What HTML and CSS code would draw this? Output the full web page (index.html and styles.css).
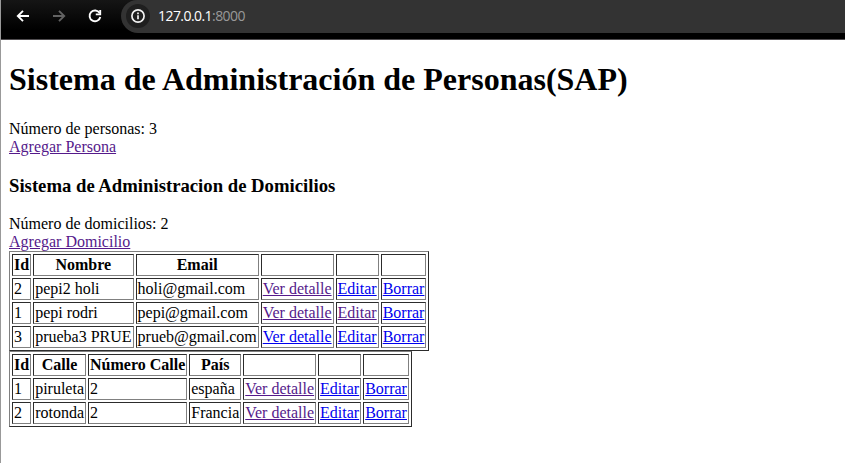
FILE: index.html
```html
<!DOCTYPE html>
<html lang="es">
<head>
<meta charset="utf-8">
<title>Sistema de Administración de Personas</title>
<link rel="stylesheet" href="styles.css">
</head>
<body>
<header class="toolbar">
  <svg class="nav" viewBox="0 0 16 16"><path d="M14 8H3.2M8 2.8 2.8 8 8 13.2"/></svg>
  <svg class="nav disabled" viewBox="0 0 16 16"><path d="M2 8h10.8M8 2.8 13.2 8 8 13.2"/></svg>
  <svg class="nav" viewBox="0 0 16 16"><path d="M12.6 5A5.4 5.4 0 1 0 13.3 9"/><path d="M13.2 2v4.4H8.8"/></svg>
  <div class="address">
    <span class="info"><svg viewBox="0 0 16 16"><circle cx="8" cy="8" r="6.1"/><path d="M8 7.2v4M8 4.6v1.6"/></svg></span>
    <span class="url">127.0.0.1<span class="port">:8000</span></span>
  </div>
</header>
<main class="page">
  <h1>Sistema de Administración de Personas(SAP)</h1>
  Número de personas: 3<br>
  <a class="visited" href="#">Agregar Persona</a>
  <h3>Sistema de Administracion de Domicilios</h3>
  Número de domicilios: 2<br>
  <a class="visited" href="#">Agregar Domicilio</a>
  <table border="1">
    <tr><th>Id</th><th>Nombre</th><th>Email</th><th></th><th></th><th></th></tr>
    <tr><td>2</td><td>pepi2 holi</td><td>holi@gmail.com</td><td><a class="visited" href="#">Ver detalle</a></td><td><a href="#">Editar</a></td><td><a href="#">Borrar</a></td></tr>
    <tr><td>1</td><td>pepi rodri</td><td>pepi@gmail.com</td><td><a class="visited" href="#">Ver detalle</a></td><td><a class="visited" href="#">Editar</a></td><td><a href="#">Borrar</a></td></tr>
    <tr><td>3</td><td>prueba3 PRUE</td><td>prueb@gmail.com</td><td><a href="#">Ver detalle</a></td><td><a href="#">Editar</a></td><td><a href="#">Borrar</a></td></tr>
  </table>
  <table border="1">
    <tr><th>Id</th><th>Calle</th><th>Número Calle</th><th>País</th><th></th><th></th><th></th></tr>
    <tr><td>1</td><td>piruleta</td><td>2</td><td>españa</td><td><a class="visited" href="#">Ver detalle</a></td><td><a href="#">Editar</a></td><td><a href="#">Borrar</a></td></tr>
    <tr><td>2</td><td>rotonda</td><td>2</td><td>Francia</td><td><a class="visited" href="#">Ver detalle</a></td><td><a href="#">Editar</a></td><td><a href="#">Borrar</a></td></tr>
  </table>
</main>
</body>
</html>
```
FILE: styles.css
```css
body { margin: 0; background: #fff; color: #000; font: 16px "Liberation Serif", serif; overflow: hidden; border-left: 1px solid #999; }
.toolbar { display: flex; align-items: flex-start; height: 40px; padding-left: 14px; box-sizing: border-box; background: linear-gradient(#151515, #000 30px); border-bottom: 1px solid #504d50; }
.nav { width: 16px; height: 16px; margin: 8px 20px 0 0; fill: none; stroke: #fff; stroke-width: 1.9; }
.nav.disabled { stroke: #626262; }
.address { display: flex; align-items: center; flex: 1; height: 33px; padding-left: 5px; box-sizing: border-box; background: #333; border-radius: 16px 0 0 17px; margin-left: -2px; }
.info { display: flex; align-items: center; justify-content: center; width: 24px; height: 24px; margin: 0 8px 1px 0; border-radius: 50%; background: #1f1f1f; }
.info svg { width: 16px; height: 16px; fill: none; stroke: #f2f2f2; stroke-width: 1.7; }
.url { font: 14px/18px "Open Sans", sans-serif; letter-spacing: -.56px; color: #fff; margin-bottom: 2px; }
.port { color: #999; }
.page { padding: 0 8px; height: 423px; box-sizing: border-box; line-height: 18px; display: flow-root; }
h1 { font-size: 32px; line-height: 37px; margin: 21px 0 22px; }
h3 { font-size: 18.72px; line-height: 21px; margin: 19px 0; }
a { color: #0000ee; }
a.visited { color: #551a8b; }
table { border: 1px outset gray; border-spacing: 2px; }
th, td { height: 18px; padding: 1px; }
```
